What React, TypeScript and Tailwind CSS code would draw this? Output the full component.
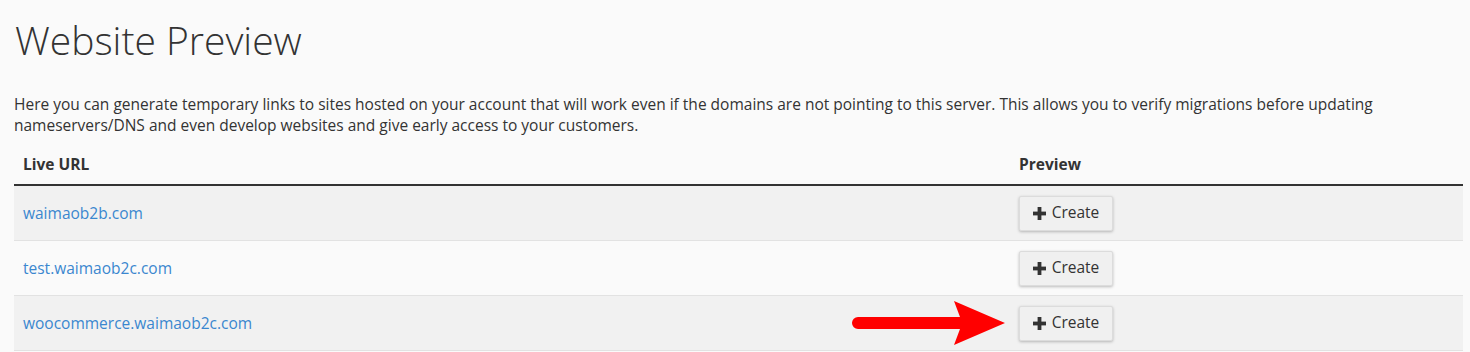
import React from "react";

const rows = ["waimaob2b.com", "test.waimaob2c.com", "woocommerce.waimaob2c.com"];

function PlusIcon() {
  return (
    <svg width="13" height="13" viewBox="0 0 13 13" className="shrink-0">
      <rect x="4.6" y="0" width="3.8" height="13" fill="#333" />
      <rect x="0" y="4.6" width="13" height="3.8" fill="#333" />
    </svg>
  );
}

function Arrow() {
  return (
    <svg
      className="absolute left-[832px] top-0"
      width="162"
      height="52"
      viewBox="846 296 162 52"
    >
      <path
        d="M858 317 L960 317 L954 301 L1005 323 L954 345 L960 329 L858 329 A6 6 0 0 1 858 317 Z"
        fill="#ff0000"
      />
    </svg>
  );
}

export default function App() {
  return (
    <div
      className="w-[1470px] h-[352px] overflow-hidden bg-[#fafafa] text-[#333] pl-[14px] pr-[7px]"
      style={{ fontFamily: '"Open Sans", "Noto Sans", sans-serif' }}
    >
      <h1 className="pt-[14px] pl-[1px] text-[39px] font-light leading-[52px] text-[#333]">
        Website Preview
      </h1>
      <p className="mt-[28px] text-[15.5px] leading-[21px] text-[#333] pr-[80px]">
        Here you can generate temporary links to sites hosted on your account that will work even if the domains are not
        pointing to this server. This allows you to verify migrations before updating nameservers/DNS and even develop
        websites and give early access to your customers.
      </p>
      <div className="mt-[10px]">
        <div className="flex h-[40px] items-center border-b-2 border-[#333] text-[15.5px] font-bold text-[#333]">
          <div className="w-[996px] pl-[9px]">Live URL</div>
          <div className="flex-1 pl-[9px]">Preview</div>
        </div>
        {rows.map((r, i) => (
          <div
            key={r}
            className={`relative flex h-[55px] items-center border-b border-[#e2e2e2] ${
              i % 2 === 0 ? "bg-[#f1f1f1]" : "bg-[#fafafa]"
            }`}
          >
            <div className="w-[996px] pl-[9px]">
              <a href="#" className="text-[15.5px] text-[#3a87cf]">
                {r}
              </a>
            </div>
            <div className="flex-1 pl-[9px]">
              <button className="flex h-[35px] w-[94px] items-center justify-center gap-[6px] rounded-[2px] border border-[#dcdcdc] bg-[#f0f0f0] text-[15.5px] text-[#333] shadow-[0_1px_3px_rgba(0,0,0,0.25)]">
                <PlusIcon />
                <span>Create</span>
              </button>
            </div>
            {i === 2 && <Arrow />}
          </div>
        ))}
      </div>
    </div>
  );
}
